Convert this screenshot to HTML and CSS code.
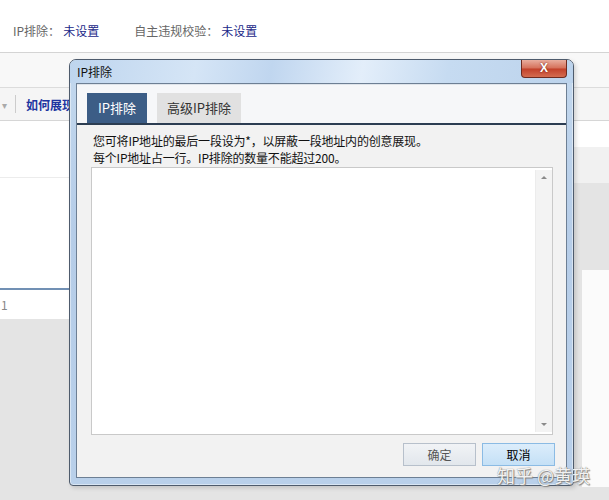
FILE: index.html
```html
<!DOCTYPE html>
<html lang="zh-CN">
<head>
    <meta charset="UTF-8">
    <meta name="viewport" content="width=device-width, initial-scale=1.0">
    <title>IP排除</title>
    <link rel="stylesheet" href="styles.css">
</head>
<body>

    <div class="page">
        <div class="summary">
            <span class="summary-item"><span class="label">IP排除：</span><span class="value">未设置</span></span>
            <span class="summary-item"><span class="label">自主违规校验：</span><span class="value">未设置</span></span>
        </div>
        <div class="subbar"></div>
        <div class="toolbar">
            <span class="caret">▾</span>
            <span class="sep"></span>
            <a class="tool-link" href="#">如何展现</a>
        </div>
        <div class="content">
            <div class="left-col">
                <div class="grid-head"></div>
                <div class="grid-body"></div>
                <div class="grid-row">1</div>
            </div>
            <div class="right-col">
                <div class="r-white"></div>
                <div class="r-light"></div>
                <div class="r-gray"></div>
                <div class="r-panel"></div>
            </div>
        </div>
    </div>

    <!-- modal window, sits over the page -->
    <div class="dialog">
        <div class="titlebar">
            <span class="dialog-title">IP排除</span>
            <button class="close-btn" type="button">X</button>
        </div>
        <div class="client">
            <div class="tabbar">
                <span class="tab active">IP排除</span>
                <span class="tab">高级IP排除</span>
            </div>
            <div class="dialog-body">
                <p class="hint">您可将IP地址的最后一段设为*，以屏蔽一段地址内的创意展现。<br>每个IP地址占一行。IP排除的数量不能超过200。</p>
                <div class="textbox">
                    <textarea class="ip-list"></textarea>
                    <div class="scrollbar">
                        <span class="arrow up"></span>
                        <span class="arrow down"></span>
                    </div>
                </div>
                <div class="actions">
                    <button class="btn" type="button">确定</button>
                    <button class="btn primary" type="button">取消</button>
                </div>
            </div>
        </div>
    </div>

    <div class="watermark">知乎 @黄瑛</div>

</body>
</html>
```

FILE: styles.css
```css
* {
    margin: 0;
    padding: 0;
    box-sizing: border-box;
}

body {
    width: 609px;
    height: 500px;
    overflow: hidden;
    background: #fff;
    font-family: "Noto Sans CJK SC", "Liberation Sans", sans-serif;
    font-size: 12px;
    color: #222;
}

.page {
    display: flex;
    flex-direction: column;
    height: 500px;
}

/* top summary line */
.summary {
    height: 53px;
    padding: 23px 0 0 13px;
    border-bottom: 1px solid #d4d4d4;
    display: flex;
    gap: 35px;
    line-height: 16px;
}

.summary-item .label {
    color: #666;
}

.summary-item .value {
    color: #1b2788;
    margin-left: 3px;
}

.subbar {
    height: 35px;
    background: #f8f8f8;
    border-bottom: 1px solid #dcdcdc;
}

.toolbar {
    height: 33px;
    background: #f5f5f5;
    border-bottom: 1px solid #d6d6d6;
    display: flex;
    align-items: center;
    padding-left: 2px;
}

.caret {
    color: #aaa;
    font-size: 10px;
}

.sep {
    width: 1px;
    height: 18px;
    background: #ccc;
    margin: 0 10px 0 8px;
}

.tool-link {
    color: #2034a0;
    font-weight: bold;
    text-decoration: none;
}

.content {
    flex: 1;
    display: flex;
    background: #e4e4e4;
}

.left-col {
    flex: 1;
    display: flex;
    flex-direction: column;
}

.grid-head {
    height: 57px;
    background: #fff;
    border-bottom: 1px solid #ececec;
}

.grid-body {
    height: 112px;
    background: #fff;
    border-bottom: 2px solid #7190b4;
}

.grid-row {
    height: 29px;
    background: #fff;
    color: #888;
    padding: 6px 0 0 1px;
}

.right-col {
    width: 36px;
    display: flex;
    flex-direction: column;
}

.r-white {
    height: 26px;
    background: #fff;
}

.r-light {
    height: 36px;
    background: #f1f1f1;
}

.r-gray {
    height: 87px;
    background: #e4e4e4;
}

.r-panel {
    height: 217px;
    margin-left: 9px;
    background: #fbfbfb;
}

/* dialog window */
.dialog {
    position: absolute;
    left: 69px;
    top: 59px;
    width: 505px;
    height: 427px;
    border: 1px solid #4e5b6c;
    border-radius: 7px 7px 4px 4px;
    padding: 0 6px 7px;
    display: flex;
    flex-direction: column;
    background: linear-gradient(to bottom, #c3d8ee, #b6cde8 40%, #b9d0ea);
    box-shadow: inset 0 0 0 1px rgba(255, 255, 255, 0.45), 2px 2px 4px rgba(0, 0, 0, 0.15);
}

.titlebar {
    height: 23px;
    margin: 0 -6px;
    padding: 0 6px 0 7px;
    display: flex;
    justify-content: space-between;
    align-items: flex-start;
    background: linear-gradient(100deg, #bed5ee 0%, #d5e5f6 25%, #c0d6ef 40%, #e3eefa 58%, #c6dbf1 75%, #bcd3ec 100%);
    border-radius: 6px 6px 0 0;
}

.dialog-title {
    line-height: 23px;
    color: #111;
}

.close-btn {
    width: 46px;
    height: 18px;
    border: 1px solid #6e2b20;
    border-top: none;
    border-radius: 0 0 4px 4px;
    background: linear-gradient(to bottom, #e9ad9e, #d5705a 48%, #c2402a 52%, #d46c50);
    color: #fff;
    font-family: "Liberation Sans", sans-serif;
    font-size: 12px;
    font-weight: bold;
    line-height: 15px;
    text-shadow: 0 0 2px #6a1a10;
}

.client {
    flex: 1;
    display: flex;
    flex-direction: column;
    background: #f2f2f2;
    border: 1px solid #6d7f94;
}

.tabbar {
    display: flex;
    gap: 10px;
    padding: 8px 0 0 10px;
    background: #f6f7f9;
    border-top: 1px solid #dfe4ea;
    border-bottom: 2px solid #2c3d52;
}

.tab {
    height: 30px;
    padding: 0 10px;
    line-height: 30px;
    font-size: 13px;
    color: #333;
    background: #e1e1e1;
}

.tab.active {
    width: 60px;
    text-align: center;
    padding: 0;
    color: #fff;
    background: #3c5d86;
}

.dialog-body {
    flex: 1;
    display: flex;
    flex-direction: column;
    padding: 7px 13px 0 14px;
}

.hint {
    padding-left: 2px;
    line-height: 17px;
    color: #111;
    letter-spacing: -0.2px;
}

.textbox {
    height: 268px;
    margin-top: 1px;
    display: flex;
    background: #fff;
    border: 1px solid #c9c9c9;
    padding: 2px 0 2px 0;
}

.ip-list {
    flex: 1;
    border: none;
    outline: none;
    resize: none;
    overflow: hidden;
    background: transparent;
}

.scrollbar {
    width: 17px;
    position: relative;
    background: #f3f3f3;
    border-left: 1px solid #ececec;
}

.arrow {
    position: absolute;
    left: 5px;
    width: 0;
    height: 0;
    border-left: 3px solid transparent;
    border-right: 3px solid transparent;
}

.arrow.up {
    top: 6px;
    border-bottom: 3px solid #8a8a8a;
}

.arrow.down {
    bottom: 6px;
    border-top: 3px solid #8a8a8a;
}

.actions {
    display: flex;
    justify-content: flex-end;
    gap: 6px;
    margin: 8px -2px 0 0;
}

.btn {
    width: 73px;
    height: 23px;
    font-family: inherit;
    font-size: 12px;
    color: #555;
    border: 1px solid #b7c0cb;
    background: linear-gradient(to bottom, #f1f3f6, #e2e7ec);
}

.btn.primary {
    color: #000;
    border-color: #8bbbe4;
    background: linear-gradient(to bottom, #dcedfb, #c4e0f6);
}

.watermark {
    position: absolute;
    left: 497px;
    top: 462px;
    font-size: 18px;
    color: rgba(255, 255, 255, 0.92);
    text-shadow: 0 0 1px #666, 1px 1px 1px #888;
    white-space: nowrap;
}
```
